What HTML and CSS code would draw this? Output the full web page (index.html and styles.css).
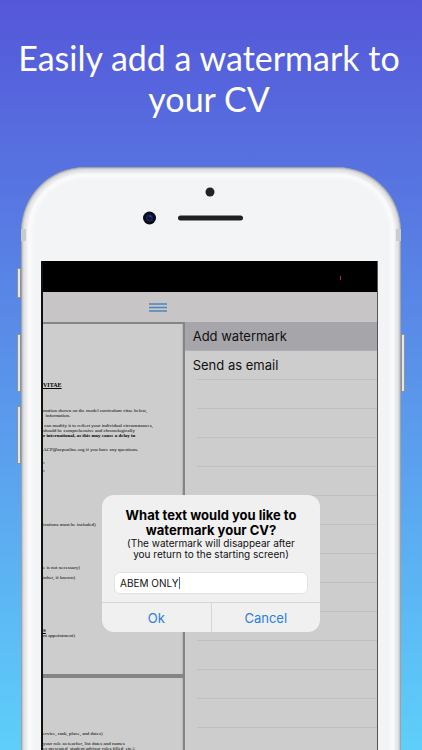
FILE: index.html
```html
<!DOCTYPE html>
<html lang="en">
<head>
  <meta charset="UTF-8" />
  <meta name="viewport" content="width=device-width, initial-scale=1.0"/>
  <title>Add a watermark to your CV</title>
  <link rel="stylesheet" href="styles.css">
</head>
<body>

  <h1 class="headline">Easily add a watermark to your CV</h1>

  <div class="phone">
    <span class="side-btn mute"></span>
    <span class="side-btn vol-up"></span>
    <span class="side-btn vol-down"></span>
    <span class="side-btn power"></span>
    <span class="band band-left"></span>
    <span class="band band-right"></span>

    <div class="phone-top">
      <svg width="104" height="46" viewBox="0 0 104 46" aria-hidden="true">
        <circle cx="67" cy="9" r="4.5" fill="#222326"/>
        <circle cx="6.5" cy="35" r="6.5" fill="#0b0d14"/>
        <circle cx="6.5" cy="35" r="3.6" fill="#14235f"/>
        <circle cx="6.5" cy="35" r="1.8" fill="#0a1030"/>
        <circle cx="7.5" cy="33.5" r="1" fill="#2f50b8"/>
        <rect x="35" y="32.5" width="65" height="5" rx="2.5" fill="#1f2023"/>
      </svg>
    </div>

    <div class="screen">
      <div class="status-bar"><span class="rec"></span></div>

      <div class="toolbar">
        <button class="menu-btn" aria-label="Menu">
          <svg width="18" height="9" viewBox="0 0 18 9" fill="none" stroke="#4a86c0" stroke-width="1.4">
            <path d="M0 1H18M0 4.5H18M0 8H18"/>
          </svg>
        </button>
      </div>

      <div class="content">
        <div class="document">
          <div class="page page-one">
            <h2>VITAE</h2>
            <p class="intro">mation shown on the model curriculum vitae below,<br>&nbsp; information.</p>
            <p class="modify">&nbsp;can modify it to reflect your individual circumstances,<br>should be comprehensive and chronologically<br><b>r international, as this may cause a delay in</b></p>
            <p class="contact">ACP@acponline.org if you have any questions.</p>
            <p class="mark first"><b>:</b></p>
            <p class="mark"><b>:</b></p>
            <p class="included">ications must be included)</p>
            <p class="necessary">e is not necessary)</p>
            <p class="known">mber, if known)</p>
            <p class="appointment"><b><u>S</u></b><br>nt appointment)</p>
          </div>
          <div class="page page-two">
            <p class="service">ervice, rank, place, and dates)</p>
            <p class="role">your role as teacher, list dates and names<br>es presented, student advisor roles filled, etc.)</p>
          </div>
        </div>

        <ul class="menu">
          <li class="selected"><button>Add watermark</button></li>
          <li><button>Send as email</button></li>
          <li></li>
          <li></li>
          <li></li>
          <li></li>
          <li></li>
          <li></li>
          <li></li>
          <li></li>
          <li></li>
          <li></li>
          <li></li>
          <li></li>
          <li></li>
        </ul>
      </div>

      <form class="alert" role="dialog" aria-labelledby="alertTitle">
        <div class="alert-body">
          <label for="watermark" class="alert-title" id="alertTitle">What text would you like to<br>watermark your CV?</label>
          <p>(The watermark will disappear after<br>you return to the starting screen)</p>
          <div class="field">
            <input type="text" id="watermark" value="ABEM ONLY">
            <span class="caret"></span>
          </div>
        </div>
        <div class="alert-actions">
          <button type="button">Ok</button>
          <button type="button">Cancel</button>
        </div>
      </form>
    </div>
  </div>

</body>
</html>
```

FILE: styles.css
```css
* {
  box-sizing: border-box;
}

body {
  margin: 0;
  height: 100vh;
  overflow: hidden;
  display: flex;
  flex-direction: column;
  font-family: Inter, Arial, sans-serif;
  color: #111;
  background: linear-gradient(#5557d9, #5ecffa);
}

button {
  border: 0;
  padding: 0;
  background: none;
  font-family: inherit;
  cursor: pointer;
}

.headline {
  margin: 0;
  padding: 37px 16px 48px 12px;
  font-family: Lato, sans-serif;
  font-size: 34px;
  font-weight: 400;
  line-height: 41px;
  text-align: center;
  color: white;
}

/* phone body, runs off the bottom of the window */
.phone {
  position: relative;
  flex: 1;
  min-height: 0;
  margin: 0 21px -20px;
  padding: 0 22px 0 19px;
  display: flex;
  flex-direction: column;
  border: 1px solid #a0a2a5;
  border-bottom: 0;
  border-radius: 64px 64px 0 0;
  background: #f3f4f6;
  box-shadow: inset 0 0 2px 1px #b9bbbe, inset 0 0 2px 5px #e6e7e9, inset 0 0 3px 10px #fafafb;
}

.side-btn {
  position: absolute;
  width: 4px;
  height: 58px;
  border: 1px solid #8f9398;
  background: #e4e6ea;
}

.mute {
  left: -5px;
  top: 100px;
  height: 30px;
}

.vol-up {
  left: -5px;
  top: 166px;
}

.vol-down {
  left: -5px;
  top: 238px;
}

.power {
  right: -5px;
  top: 166px;
}

.band {
  position: absolute;
  top: 61px;
  width: 5px;
  height: 12px;
  background: #c9cbcc;
}

.band-left {
  left: -1px;
}

.band-right {
  right: -1px;
}

.phone-top {
  height: 93px;
  padding: 15px 0 0 102px;
}

/* app screen */
.screen {
  position: relative;
  flex: 1;
  min-height: 0;
  display: flex;
  flex-direction: column;
  border-left: 2px solid #111;
  border-right: 1px solid #555;
  background: #cdcdcd;
}

.status-bar {
  flex: none;
  height: 31px;
  padding: 15px 36px 0 0;
  display: flex;
  justify-content: flex-end;
  background: black;
}

.rec {
  width: 1px;
  height: 4px;
  background: #c3263a;
}

.toolbar {
  flex: none;
  height: 30px;
  padding-left: 106px;
  display: flex;
  align-items: center;
  background: #c7c5c6;
}

.menu-btn {
  display: flex;
}

.content {
  flex: 1;
  min-height: 0;
  display: grid;
  grid-template-columns: minmax(0, 14fr) minmax(0, 19fr);
  overflow: hidden;
}

.document {
  padding: 2px 2px 0 0;
  overflow: hidden;
  background: #858585;
  font-family: "Liberation Serif", serif;
  font-size: 5px;
  line-height: 5px;
  white-space: nowrap;
  color: #000;
}

.page {
  background: #cdcdcd;
  border-right: 1px solid #b8b8b8;
  overflow: hidden;
}

.page h2,
.page p {
  margin: 0;
}

.page-one {
  height: 350px;
  padding-top: 59px;
}

.page h2 {
  font-size: 6px;
  text-decoration: underline;
}

.page .intro {
  margin-top: 20px;
}

.page .modify {
  margin-top: 5px;
}

.page .contact {
  margin-top: 9px;
}

.page .mark {
  margin-top: 3px;
}

.page .first {
  margin-top: 8px;
}

.page .included {
  margin-top: 49px;
}

.page .necessary {
  margin-top: 38px;
}

.page .known {
  margin-top: 5px;
}

.page .appointment {
  margin-top: 48px;
}

.page-two {
  height: 350px;
  margin-top: 4px;
  padding-top: 53px;
}

.page .role {
  margin-top: 5px;
}

.menu {
  margin: 0;
  padding: 0;
  list-style: none;
}

.menu li {
  height: 29px;
  margin-left: 12px;
  border-bottom: 1px solid #c0c0c1;
}

.menu button {
  width: 100%;
  height: 28px;
  margin-left: -4px;
  font-size: 13px;
  text-align: left;
  color: #111;
}

.menu .selected {
  margin-left: 0;
  padding-left: 12px;
  border-bottom-color: #b0b0b4;
  background: #a6a5aa;
}

/* alert */
.alert {
  position: absolute;
  top: 234px;
  left: 50%;
  width: 218px;
  margin-left: -108px;
  border-radius: 12px;
  background: #f0f0f0;
  overflow: hidden;
}

.alert-body {
  padding: 13px 12px 8px;
  text-align: center;
}

.alert-title {
  display: block;
  font-size: 13px;
  font-weight: 700;
  line-height: 15px;
  color: black;
}

.alert p {
  margin: 0 0 12px;
  font-size: 10px;
  line-height: 11px;
}

.field {
  position: relative;
}

.field input {
  display: block;
  width: 100%;
  height: 22px;
  padding: 0 5px;
  border: 1px solid #e2e2e2;
  border-radius: 6px;
  background: white;
  font-family: inherit;
  font-size: 10px;
  color: #111;
  outline: none;
}

.caret {
  position: absolute;
  top: 5px;
  left: 65px;
  width: 1px;
  height: 12px;
  background: #3f66e8;
}

.alert-actions {
  display: flex;
  border-top: 1px solid #d6d6d7;
}

.alert-actions button {
  flex: 1;
  height: 29px;
  font-size: 13px;
  color: #2a7de1;
}

.alert-actions button + button {
  border-left: 1px solid #d6d6d7;
}
```
